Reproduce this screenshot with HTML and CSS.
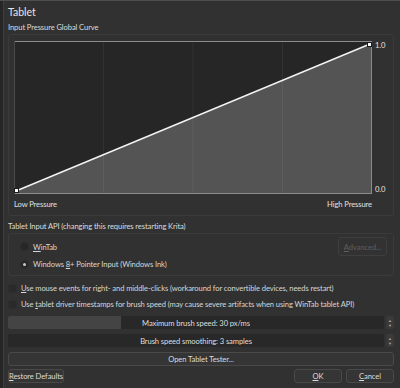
FILE: index.html
```html
<!DOCTYPE html>
<html>
<head>
    <title>Tablet</title>
    <link rel="stylesheet" href="styles.css">
</head>
<body>
<div class="frame">
    <div class="edge"></div>
    <div class="page">
        <div class="title">Tablet</div>
        <div class="section-label">Input Pressure Global Curve</div>

        <div class="group curve-group">
            <div class="curve-row">
                <div class="curve">
                    <svg width="358" height="153" viewBox="0 0 358 153">
                        <rect x="0" y="0" width="358" height="153" fill="#262626"/>
                        <polygon points="2,150 356,3 357,3 357,152 2,152" fill="#545454"/>
                        <line x1="89.5" y1="1" x2="89.5" y2="152" stroke="#ffffff" stroke-opacity="0.06"/>
                        <line x1="179" y1="1" x2="179" y2="152" stroke="#ffffff" stroke-opacity="0.06"/>
                        <line x1="268.5" y1="1" x2="268.5" y2="152" stroke="#ffffff" stroke-opacity="0.06"/>
                        <line x1="0" y1="0.5" x2="358" y2="0.5" stroke="#8c8c8c"/>
                        <line x1="0" y1="152.5" x2="358" y2="152.5" stroke="#8c8c8c"/>
                        <line x1="357.5" y1="0" x2="357.5" y2="153" stroke="#8c8c8c"/>
                        <line x1="0.5" y1="0" x2="0.5" y2="153" stroke="#4a4a4a"/>
                        <line x1="2" y1="150" x2="356" y2="3" stroke="#f4f4f4" stroke-width="1.4"/>
                        <rect x="0.5" y="147.5" width="4" height="4" fill="#ffffff" stroke="#1a1a1a" stroke-width="1"/>
                        <rect x="353.5" y="1.5" width="4" height="4" fill="#ffffff" stroke="#1a1a1a" stroke-width="1"/>
                    </svg>
                </div>
                <div class="axis">
                    <span>1.0</span>
                    <span>0.0</span>
                </div>
            </div>
            <div class="pressure-labels">
                <span>Low Pressure</span>
                <span>High Pressure</span>
            </div>
        </div>

        <div class="section-label api-label">Tablet Input API (changing this requires restarting Krita)</div>

        <div class="group api-group">
            <div class="api-row">
                <label class="radio"><span class="dot"></span><span><u>W</u>inTab</span></label>
                <button class="btn btn-disabled"><u>A</u>dvanced...</button>
            </div>
            <div class="api-row">
                <label class="radio"><span class="dot dot-on"></span><span>Windows <u>8</u>+ Pointer Input (Windows Ink)</span></label>
            </div>
        </div>

        <label class="check"><span class="box"></span><span><u>U</u>se mouse events for right- and middle-clicks (workaround for convertible devices, needs restart)</span></label>
        <label class="check"><span class="box"></span><span>Use <u>t</u>ablet driver timestamps for brush speed (may cause severe artifacts when using WinTab tablet API)</span></label>

        <div class="slider-row">
            <div class="slider">
                <div class="slider-fill" style="width: 30%"></div>
                <span class="slider-text">Maximum brush speed: 30 px/ms</span>
            </div>
            <div class="spin"><span>&#9650;</span><span>&#9660;</span></div>
        </div>
        <div class="slider-row">
            <div class="slider">
                <span class="slider-text">Brush speed smoothing: 3 samples</span>
            </div>
            <div class="spin"><span>&#9650;</span><span>&#9660;</span></div>
        </div>

        <button class="btn btn-wide">Open Tablet Tester...</button>

        <div class="footer">
            <button class="btn btn-restore"><u>R</u>estore Defaults</button>
            <div class="footer-right">
                <button class="btn btn-dialog"><u>O</u>K</button>
                <button class="btn btn-dialog"><u>C</u>ancel</button>
            </div>
        </div>
    </div>
</div>
</body>
</html>
```
FILE: styles.css
```css
body {
    margin: 0;
    background-color: #313131;
    color: #d6d6d6;
    font-family: Lato, "Open Sans", sans-serif;
    font-size: 7.6px;
    letter-spacing: -0.1px;
}

u { text-decoration: underline; }

.frame {
    display: flex;
    height: 388px;
    border-top: 1px solid #4e4e4e;
    box-sizing: border-box;
    overflow: hidden;
}

.edge {
    width: 3px;
    background-color: #262626;
    border-right: 1px solid #3e3e3e;
}

.page {
    flex: 1;
    padding: 0 6px 0 4px;
    display: flex;
    flex-direction: column;
    white-space: nowrap;
}

.title {
    font-size: 10.5px;
    letter-spacing: 0;
    color: #e6e6e6;
    height: 18px;
    line-height: 18px;
    margin-top: 2px;
}

.section-label {
    height: 13px;
    line-height: 13px;
    color: #dcdcdc;
}

.group {
    border: 1px solid #3b3b3b;
    border-radius: 3px;
}

.curve-group {
    height: 182px;
    box-sizing: border-box;
    padding: 6px 0 0 5px;
}

.curve-row {
    display: flex;
}

.curve {
    width: 358px;
    height: 153px;
}
.curve svg { display: block; }

.axis {
    display: flex;
    flex-direction: column;
    justify-content: space-between;
    padding: 0 0 0 3px;
    height: 153px;
    color: #e0e0e0;
}
.axis span { line-height: 9px; }

.pressure-labels {
    width: 358px;
    display: flex;
    justify-content: space-between;
    margin-top: 5px;
    color: #e0e0e0;
}

.api-label {
    margin-top: 4px;
}

.api-group {
    height: 43px;
    box-sizing: border-box;
    padding: 3px 6px 0 11px;
    margin-bottom: 4px;
}

.api-row {
    display: flex;
    justify-content: space-between;
    align-items: center;
    height: 19px;
}
.api-row + .api-row { height: 16px; }

.radio, .check {
    display: flex;
    align-items: center;
    gap: 4px;
}

.dot {
    width: 9px;
    height: 9px;
    border-radius: 50%;
    background-color: #272727;
    border: 1px solid #2c2c2c;
    box-sizing: border-box;
    display: flex;
    align-items: center;
    justify-content: center;
}
.dot-on::after {
    content: "";
    width: 3px;
    height: 3px;
    border-radius: 50%;
    background-color: #c8c8c8;
}

.check {
    height: 16px;
}

.box {
    width: 9px;
    height: 9px;
    background-color: #2a2a2a;
    border: 1px solid #2e2e2e;
    box-sizing: border-box;
}

.btn {
    font-family: Lato, "Open Sans", sans-serif;
    font-size: 7.6px;
    letter-spacing: -0.1px;
    color: #dcdcdc;
    background-color: #353535;
    border: 1px solid #494949;
    border-radius: 3px;
    padding: 0;
    height: 14px;
    line-height: 12px;
    white-space: nowrap;
}
.btn-disabled {
    width: 49px;
    height: 19px;
    color: #5e5e5e;
    border-color: #3e3e3e;
    background-color: #323232;
}

.slider-row {
    display: flex;
    gap: 2px;
    height: 13px;
    margin-top: 4px;
}
.slider-row + .slider-row { margin-top: 5px; }

.slider {
    flex: 1;
    position: relative;
    background-color: #282828;
    border-radius: 2px;
    display: flex;
    align-items: center;
    justify-content: center;
    overflow: hidden;
}
.slider-fill {
    position: absolute;
    left: 0;
    top: 0;
    bottom: 0;
    background-color: #444444;
}
.slider-text {
    position: relative;
    color: #dedede;
}

.spin {
    width: 8px;
    background-color: #3a3a3a;
    border-radius: 2px;
    display: flex;
    flex-direction: column;
    align-items: center;
    justify-content: center;
    font-size: 4px;
    line-height: 5px;
    color: #a8a8a8;
}

.btn-wide {
    margin-top: 5px;
    height: 14px;
    width: 100%;
}

.footer {
    display: flex;
    justify-content: space-between;
    margin-top: 3px;
}
.footer-right {
    display: flex;
    gap: 4px;
}
.btn-restore {
    width: 56px;
}
.btn-dialog {
    width: 48px;
}
```
